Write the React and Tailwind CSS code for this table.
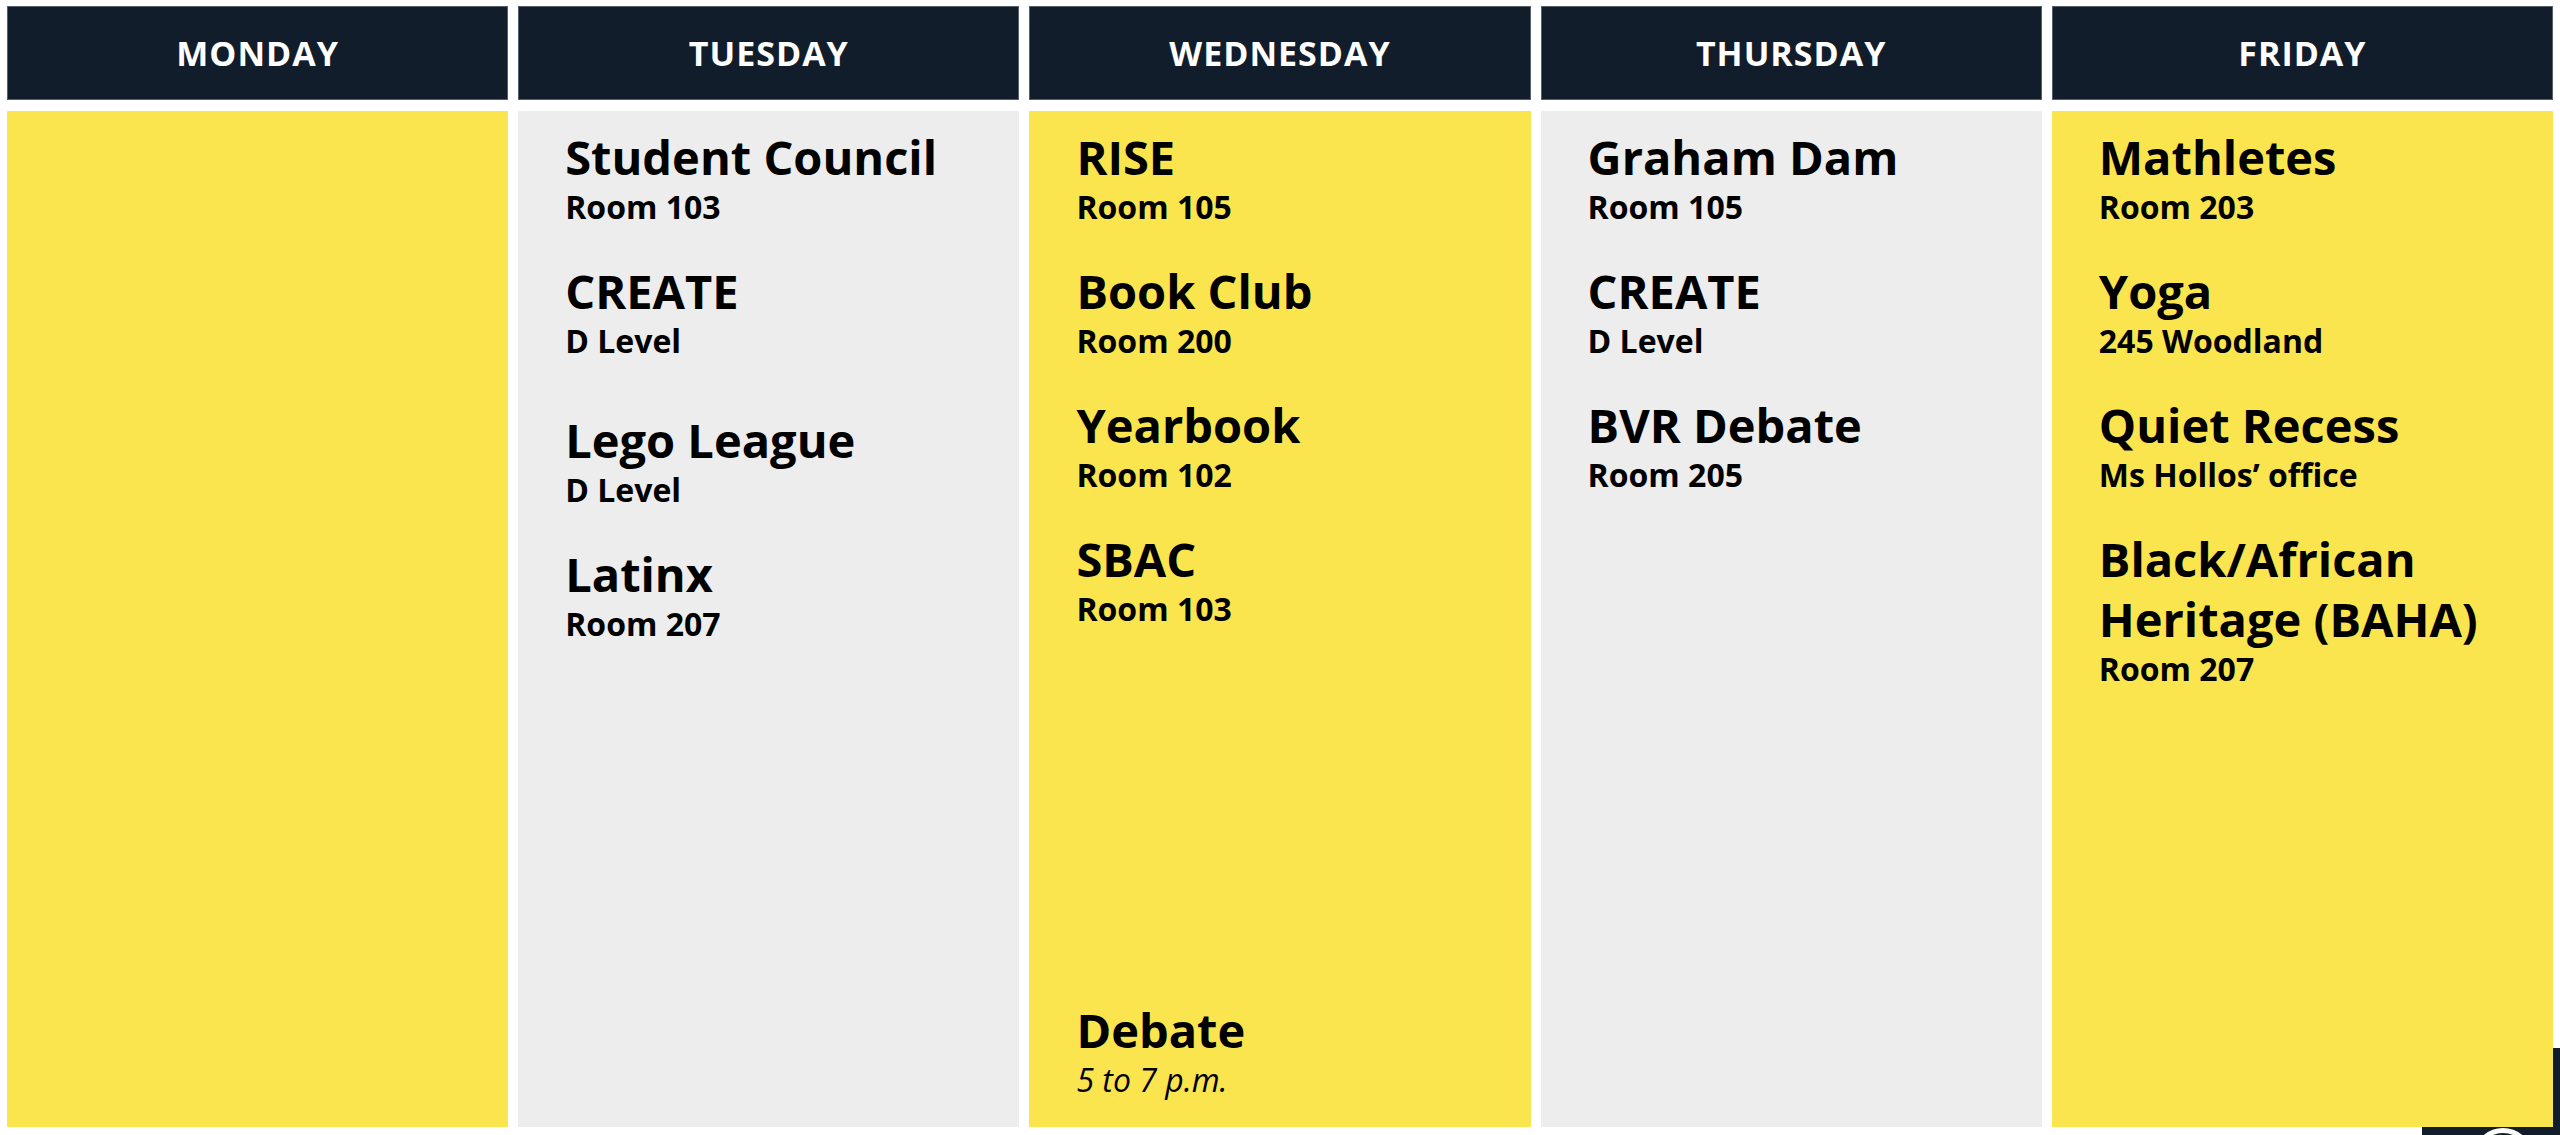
const days = [
  { name: "MONDAY", color: "yellow", events: [] },
  {
    name: "TUESDAY",
    color: "gray",
    events: [
      { title: "Student Council", place: "Room 103" },
      { title: "CREATE", place: "D Level", extra: true },
      { title: "Lego League", place: "D Level" },
      { title: "Latinx", place: "Room 207" },
    ],
  },
  {
    name: "WEDNESDAY",
    color: "yellow",
    events: [
      { title: "RISE", place: "Room 105" },
      { title: "Book Club", place: "Room 200" },
      { title: "Yearbook", place: "Room 102" },
      { title: "SBAC", place: "Room 103" },
    ],
    bottom: { title: "Debate", place: "5 to 7 p.m.", italic: true },
  },
  {
    name: "THURSDAY",
    color: "gray",
    events: [
      { title: "Graham Dam", place: "Room 105" },
      { title: "CREATE", place: "D Level" },
      { title: "BVR Debate", place: "Room 205" },
    ],
  },
  {
    name: "FRIDAY",
    color: "yellow",
    events: [
      { title: "Mathletes", place: "Room 203" },
      { title: "Yoga", place: "245 Woodland" },
      { title: "Quiet Recess", place: "Ms Hollos’ office" },
      { title: ["Black/African", "Heritage (BAHA)"], place: "Room 207" },
    ],
  },
];

function Event({ ev, className = "" }) {
  const lines = Array.isArray(ev.title) ? ev.title : [ev.title];
  return (
    <div className={className}>
      <div className="text-[47px] leading-[60px] font-bold text-black">
        {lines.map((l) => (
          <div key={l}>{l}</div>
        ))}
      </div>
      <div
        className={
          ev.italic
            ? "text-[32px] leading-[39px] italic font-normal text-black"
            : "text-[32px] leading-[39px] font-bold text-black"
        }
      >
        {ev.place}
      </div>
    </div>
  );
}

export default function App() {
  return (
    <div
      className="relative h-[1135px] w-full bg-white overflow-hidden"
      style={{ fontFamily: '"Open Sans", "Noto Sans", sans-serif' }}
    >
      {/* dark widget peeking out behind the board */}
      <div className="absolute right-0 bottom-0 w-[138px] h-[87px] rounded-tl-[44px] bg-[#111d2b]">
        <div className="absolute left-[51px] top-[80px] w-[60px] h-[60px] rounded-full border-[5px] border-white" />
      </div>

      <div className="relative z-10 grid grid-cols-5 gap-x-[10px] h-full px-[7px] pt-[6px] pb-[8px]">
        {days.map((d) => (
          <div key={d.name} className="flex flex-col min-w-0">
            <div className="h-[94px] flex items-center justify-center bg-[#111d2b] border border-[#56606c]">
              <span className="text-white text-[34px] font-bold tracking-[0.03em]">
                {d.name}
              </span>
            </div>
            <div
              className={
                d.color === "yellow"
                  ? "mt-[11px] flex-1 flex flex-col bg-[#fae54f] pl-[47px] pr-[12px] pt-[16px] pb-[28px]"
                  : "mt-[11px] flex-1 flex flex-col bg-[#ededed] pl-[47px] pr-[12px] pt-[16px] pb-[28px]"
              }
            >
              <div className="flex flex-col gap-[35px]">
                {d.events.map((ev, i) => (
                  <Event key={i} ev={ev} className={ev.extra ? "pb-[15px]" : ""} />
                ))}
              </div>
              {d.bottom && <Event ev={d.bottom} className="mt-auto" />}
            </div>
          </div>
        ))}
      </div>
    </div>
  );
}
